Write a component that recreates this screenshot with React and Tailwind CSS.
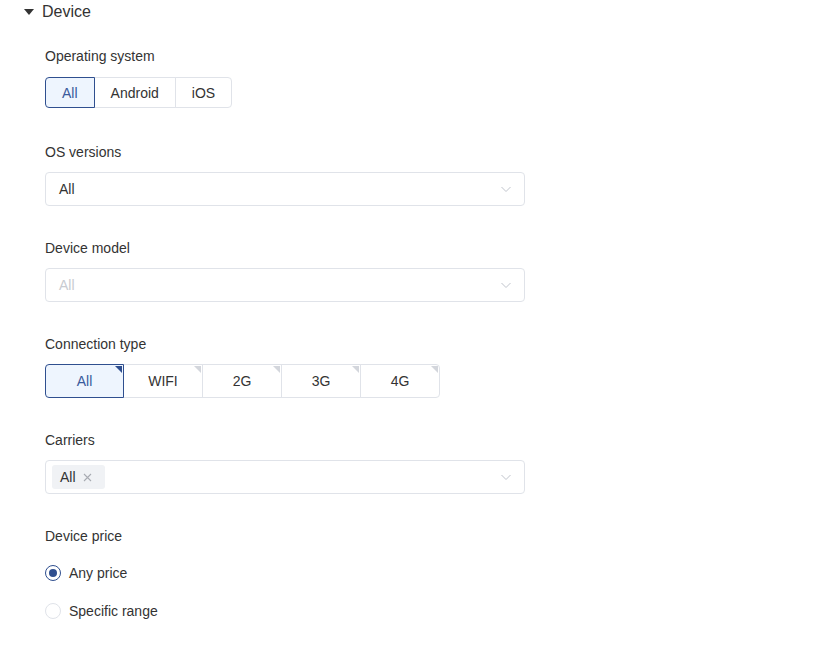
import React, { useState } from 'react';

const Chevron = ({ className }) => (
  <svg className={className} width="12" height="12" viewBox="0 0 12 12" fill="none">
    <path d="M1.5 4l4.5 4.5L10.5 4" stroke="currentColor" strokeWidth="1" />
  </svg>
);

const Field = ({ label, gap = 'mt-[10px]', children }) => (
  <div className="h-[96px] flex flex-col">
    <div className="h-5 leading-5 text-sm text-[#333]">{label}</div>
    <div className={gap}>{children}</div>
  </div>
);

const Select = ({ value, disabled, children }) => (
  <div className="w-[480px] h-[34px] border border-[#e0e3e9] rounded-[4px] bg-white flex items-center pl-[6px] pr-3">
    <div className="flex-1 flex items-center">
      {children || (
        <span className={`pl-[7px] text-sm ${disabled ? 'text-[#c8cbd1]' : 'text-[#333]'}`}>{value}</span>
      )}
    </div>
    <Chevron className="text-[#c0c4cc]" />
  </div>
);

export default function App() {
  const [os, setOs] = useState('All');
  const [conn, setConn] = useState('All');
  const [price, setPrice] = useState('any');

  return (
    <div className="bg-white min-h-screen font-['Liberation_Sans',Arial,sans-serif] text-[#333]">
      <div className="h-[22px] flex items-center pl-[24px] pt-px">
        <svg width="10" height="6" viewBox="0 0 10 6" className="mr-[8px]">
          <path d="M0 0h10L5 6z" fill="#333" />
        </svg>
        <span className="text-base text-[#333]">Device</span>
      </div>

      <div className="pl-[45px] pt-[24px]">
        <Field label="Operating system" gap="mt-[11px]">
          <div className="flex h-[31px] w-fit">
            {['All', 'Android', 'iOS'].map((o) => (
              <button
                key={o}
                onClick={() => setOs(o)}
                className={`h-full px-4 text-sm border -ml-px first:ml-0 first:rounded-l-[4px] last:rounded-r-[4px] ${
                  os === o
                    ? 'relative z-10 border-[#2f4f8f] bg-[#eef5fe] text-[#3a5a9c]'
                    : 'border-[#e0e3e9] bg-white text-[#333]'
                }`}
              >
                {o}
              </button>
            ))}
          </div>
        </Field>

        <Field label="OS versions">
          <Select value="All" />
        </Field>

        <Field label="Device model">
          <Select value="All" disabled />
        </Field>

        <Field label="Connection type">
          <div className="flex h-[34px] w-fit">
            {['All', 'WIFI', '2G', '3G', '4G'].map((o) => (
              <button
                key={o}
                onClick={() => setConn(o)}
                className={`relative w-[80px] first:w-[79px] h-full text-sm border -ml-px first:ml-0 first:rounded-l-[4px] last:rounded-r-[4px] ${
                  conn === o
                    ? 'z-10 border-[#2f4f8f] bg-[#eef5fe] text-[#3a5a9c]'
                    : 'border-[#e0e3e9] bg-white text-[#333]'
                }`}
              >
                {o}
                <span
                  className={`absolute top-px right-px w-0 h-0 border-l-[7px] border-l-transparent border-t-[7px] ${
                    conn === o ? 'border-t-[#2f4f8f]' : 'border-t-[#d3d6dc]'
                  }`}
                />
              </button>
            ))}
          </div>
        </Field>

        <Field label="Carriers">
          <Select>
            <span className="h-[24px] pl-[8px] pr-[13px] rounded-[3px] bg-[#f0f2f5] flex items-center gap-[7px] text-sm text-[#333]">
              All
              <svg width="9" height="9" viewBox="0 0 9 9">
                <path d="M1 1l7 7M8 1L1 8" stroke="#a8abb2" strokeWidth="1.1" />
              </svg>
            </span>
          </Select>
        </Field>

        <div className="flex flex-col">
          <div className="h-5 leading-5 text-sm text-[#333]">Device price</div>
          <div className="mt-[17px] flex flex-col gap-[18px]">
            {[
              ['any', 'Any price'],
              ['range', 'Specific range'],
            ].map(([k, l]) => (
              <label key={k} className="flex items-center h-5 cursor-pointer" onClick={() => setPrice(k)}>
                <span
                  className={`w-[16px] h-[16px] rounded-full border flex items-center justify-center ${
                    price === k ? 'border-[#2f4f8f]' : 'border-[#e0e3e9]'
                  }`}
                >
                  {price === k && <span className="w-[8px] h-[8px] rounded-full bg-[#2f4f8f]" />}
                </span>
                <span className="ml-[8px] text-sm text-[#333]">{l}</span>
              </label>
            ))}
          </div>
        </div>
      </div>
    </div>
  );
}
